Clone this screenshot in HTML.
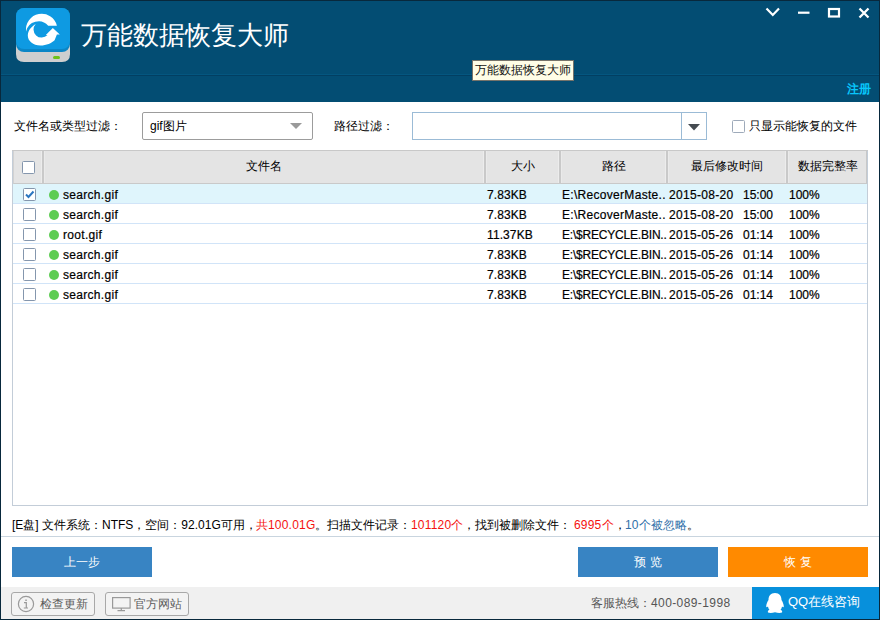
<!DOCTYPE html>
<html><head><meta charset="utf-8"><style>
*{box-sizing:border-box}
html,body{margin:0;padding:0}
body{width:880px;height:620px;overflow:hidden;position:relative;background:#fff;font-family:"Liberation Sans",sans-serif;font-size:12px;color:#000}
.a{position:absolute}
.k{letter-spacing:0;display:inline-block;text-align:justify;text-align-last:justify;white-space:nowrap;text-indent:0}
.nw{white-space:nowrap}
#hdr{left:0;top:0;width:880px;height:102px;background:#034d73}
#bord{left:0;top:0;width:880px;height:620px;border:1px solid #08283c;pointer-events:none}
.cb{width:13px;height:13px;border:1px solid #8496ad;border-radius:1.5px;background:#fff}
.th{top:151px;height:32px;line-height:31px;text-align:center;color:#000}
.sep{top:151px;width:4px;height:32px;background:#c9c9c9;border-left:1px solid #ececec;border-right:1px solid #eaeaea}
.row{left:13px;width:854px;height:20px;border-bottom:1px solid #d1e4f8}
.cell{height:20px;line-height:20px;white-space:nowrap;color:#000;-webkit-text-stroke:.2px #000}
.dot{width:10px;height:10px;border-radius:50%;background:#5dcc52}
.btn{height:30px;line-height:31px;text-align:center;color:#fff;font-size:12px}
.red{color:#f5120f}
.blu{color:#2f6fa8}
</style></head><body>
<div id="hdr" class="a"></div>
<div class="a" style="left:0;top:74px;width:880px;height:1px;background:#04567f"></div>
<div class="a" style="left:0;top:75px;width:880px;height:1px;background:#023f62"></div>
<!-- logo -->
<svg class="a" style="left:16px;top:8px" width="54" height="54" viewBox="0 0 54 54">
  <path d="M0 32 L0 46 Q0 54 8 54 L46 54 Q54 54 54 46 L54 32 Z" fill="#cfcfcf"/>
  <rect x="0" y="0" width="54" height="44" rx="8" fill="#0b86c6"/>
  <rect x="0" y="0" width="54" height="41" rx="8" fill="#0e9ae2"/>
  <rect x="37" y="48" width="7" height="3" rx="1.5" fill="#6cc21a"/>
  <g fill="#fff">
    <path d="M10.1 23.5 A15.7 15.7 0 0 1 40.9 17.7 L32.2 17.7 A12.7 12.7 0 0 0 10.1 23.5 Z"/>
    <path d="M19.7 16 C15.5 18.5 11.8 22.5 11.8 27.5 C11.8 33 17 37.5 24.5 37.5 C30.5 37.5 35.5 35 38.6 32.2 L40.9 26.4 L43.8 26.5 L36.8 20 L29.8 27 L31.5 27 A7.9 7.9 0 1 1 19.7 16 Z"/>
  </g>
</svg>
<div class="a nw" style="left:81px;top:19px;font-size:26px;line-height:32px;color:#fff"><span class="k" style="width:8em">万能数据恢复大师</span></div>
<!-- window controls -->
<svg class="a" style="left:760px;top:0" width="120" height="26" viewBox="0 0 120 26">
  <path d="M6.5 8.5 L12.8 15 L19 8.5" stroke="#fff" stroke-width="2.2" fill="none"/>
  <rect x="38" y="11.6" width="11.5" height="2.2" fill="#fff"/>
  <rect x="69" y="9" width="10" height="7.5" stroke="#fff" stroke-width="2.2" fill="none"/>
  <path d="M99.5 8.5 L108.5 17.5 M108.5 8.5 L99.5 17.5" stroke="#fff" stroke-width="2.3" fill="none"/>
</svg>
<!-- tooltip -->
<div class="a nw" style="left:472px;top:60px;width:102px;height:21px;background:#fffde6;border:1px solid #76736a;line-height:19px;padding-left:2px;color:#111"><span class="k" style="width:8em">万能数据恢复大师</span></div>
<div class="a nw" style="left:847px;top:81px;font-size:12px;line-height:16px;color:#08c6fb;font-weight:bold"><span class="k" style="width:2em">注册</span></div>

<!-- filter row -->
<div class="a nw" style="left:14px;top:118px;line-height:16px"><span class="k" style="width:9em">文件名或类型过滤：</span></div>
<div class="a" style="left:142px;top:112px;width:171px;height:28px;border:1px solid #9c9c9c;border-radius:2px;background:#fff"></div>
<div class="a nw" style="left:150px;top:118px;line-height:16px">gif<span class="k" style="width:2em">图片</span></div>
<svg class="a" style="left:290px;top:123px" width="12" height="7"><path d="M0 0 L12 0 L6 6 Z" fill="#9a9a9a"/></svg>
<div class="a nw" style="left:334px;top:118px;line-height:16px"><span class="k" style="width:5em">路径过滤：</span></div>
<div class="a" style="left:412px;top:112px;width:295px;height:28px;border:1px solid #9bbbd6;background:#fff"></div>
<div class="a" style="left:681px;top:113px;width:1px;height:26px;background:#9bbbd6"></div>
<svg class="a" style="left:688px;top:124px" width="12" height="7"><path d="M0 0 L12 0 L6 6.5 Z" fill="#454b51"/></svg>
<div class="a cb" style="left:732px;top:120px;border-color:#9eaaba"></div>
<div class="a nw" style="left:749px;top:118px;line-height:16px"><span class="k" style="width:9em">只显示能恢复的文件</span></div>

<!-- table -->
<div class="a" style="left:12px;top:150px;width:856px;height:356px;border:1px solid #c3cdd8;background:#fff"></div>
<div class="a" style="left:13px;top:151px;width:854px;height:33px;background:#e4e4e4;border-bottom:1px solid #c9c9c9;border-right:1px solid #c8c8c8;border-left:1px solid #d2d2d2"></div>
<div class="a" style="left:12px;top:150px;width:856px;height:1px;background:#c8c8c8"></div>
<div class="a cb" style="left:22px;top:161px"></div>
<div class="a sep" style="left:41px"></div>
<div class="a th" style="left:45px;width:438px"><span class="k" style="width:3em">文件名</span></div>
<div class="a sep" style="left:483px"></div>
<div class="a th" style="left:487px;width:71px"><span class="k" style="width:2em">大小</span></div>
<div class="a sep" style="left:558px"></div>
<div class="a th" style="left:562px;width:103px"><span class="k" style="width:2em">路径</span></div>
<div class="a sep" style="left:665px"></div>
<div class="a th" style="left:669px;width:116px"><span class="k" style="width:6em">最后修改时间</span></div>
<div class="a sep" style="left:785px"></div>
<div class="a th" style="left:789px;width:77px"><span class="k" style="width:5em">数据完整率</span></div>

<div class="a row" style="top:184px;background:#dff5fc;"></div><div class="a cb" style="left:23px;top:188px"></div><svg class="a" style="left:23px;top:188px" width="13" height="13"><path d="M3 6.5 L5.5 9 L10.5 3.5" stroke="#2b76c0" stroke-width="2" fill="none"/></svg><div class="a dot" style="left:49px;top:190px"></div><div class="a cell" style="left:63px;top:185px;letter-spacing:.3px">search.gif</div><div class="a cell" style="left:487px;top:185px;letter-spacing:.1px">7.83KB</div><div class="a cell" style="left:562px;top:185px;letter-spacing:.3px">E:\RecoverMaste..</div><div class="a cell" style="left:669px;top:185px;letter-spacing:.3px">2015-08-20</div><div class="a cell" style="left:743px;top:185px">15:00</div><div class="a cell" style="left:789px;top:185px">100%</div>
<div class="a row" style="top:204px;"></div><div class="a cb" style="left:23px;top:208px"></div><div class="a dot" style="left:49px;top:210px"></div><div class="a cell" style="left:63px;top:205px;letter-spacing:.3px">search.gif</div><div class="a cell" style="left:487px;top:205px;letter-spacing:.1px">7.83KB</div><div class="a cell" style="left:562px;top:205px;letter-spacing:.3px">E:\RecoverMaste..</div><div class="a cell" style="left:669px;top:205px;letter-spacing:.3px">2015-08-20</div><div class="a cell" style="left:743px;top:205px">15:00</div><div class="a cell" style="left:789px;top:205px">100%</div>
<div class="a row" style="top:224px;"></div><div class="a cb" style="left:23px;top:228px"></div><div class="a dot" style="left:49px;top:230px"></div><div class="a cell" style="left:63px;top:225px;letter-spacing:.3px">root.gif</div><div class="a cell" style="left:487px;top:225px;letter-spacing:.1px">11.37KB</div><div class="a cell" style="left:562px;top:225px;letter-spacing:-.2px">E:\$RECYCLE.BIN..</div><div class="a cell" style="left:669px;top:225px;letter-spacing:.3px">2015-05-26</div><div class="a cell" style="left:743px;top:225px">01:14</div><div class="a cell" style="left:789px;top:225px">100%</div>
<div class="a row" style="top:244px;"></div><div class="a cb" style="left:23px;top:248px"></div><div class="a dot" style="left:49px;top:250px"></div><div class="a cell" style="left:63px;top:245px;letter-spacing:.3px">search.gif</div><div class="a cell" style="left:487px;top:245px;letter-spacing:.1px">7.83KB</div><div class="a cell" style="left:562px;top:245px;letter-spacing:-.2px">E:\$RECYCLE.BIN..</div><div class="a cell" style="left:669px;top:245px;letter-spacing:.3px">2015-05-26</div><div class="a cell" style="left:743px;top:245px">01:14</div><div class="a cell" style="left:789px;top:245px">100%</div>
<div class="a row" style="top:264px;"></div><div class="a cb" style="left:23px;top:268px"></div><div class="a dot" style="left:49px;top:270px"></div><div class="a cell" style="left:63px;top:265px;letter-spacing:.3px">search.gif</div><div class="a cell" style="left:487px;top:265px;letter-spacing:.1px">7.83KB</div><div class="a cell" style="left:562px;top:265px;letter-spacing:-.2px">E:\$RECYCLE.BIN..</div><div class="a cell" style="left:669px;top:265px;letter-spacing:.3px">2015-05-26</div><div class="a cell" style="left:743px;top:265px">01:14</div><div class="a cell" style="left:789px;top:265px">100%</div>
<div class="a row" style="top:284px;"></div><div class="a cb" style="left:23px;top:288px"></div><div class="a dot" style="left:49px;top:290px"></div><div class="a cell" style="left:63px;top:285px;letter-spacing:.3px">search.gif</div><div class="a cell" style="left:487px;top:285px;letter-spacing:.1px">7.83KB</div><div class="a cell" style="left:562px;top:285px;letter-spacing:-.2px">E:\$RECYCLE.BIN..</div><div class="a cell" style="left:669px;top:285px;letter-spacing:.3px">2015-05-26</div><div class="a cell" style="left:743px;top:285px">01:14</div><div class="a cell" style="left:789px;top:285px">100%</div>

<!-- status -->
<div class="a nw" style="left:12px;top:517px;line-height:16px">[E<span class="k" style="width:1em">盘</span>] <span class="k" style="width:5em">文件系统：</span>NTFS<span class="k" style="width:4em">，空间：</span>92.01G<span class="k" style="width:3em">可用，</span></div>
<div class="a nw" style="left:256px;top:517px;line-height:16px;letter-spacing:.2px"><span class="red"><span class="k" style="width:1em">共</span>100.01G</span><span class="k" style="width:8em">。扫描文件记录：</span></div>
<div class="a nw" style="left:411px;top:517px;line-height:16px;letter-spacing:.2px"><span class="red">101120<span class="k" style="width:1em">个</span></span><span class="k" style="width:9em">，找到被删除文件：</span></div>
<div class="a nw" style="left:574px;top:517px;line-height:16px;letter-spacing:.2px"><span class="red">6995<span class="k" style="width:1em">个</span></span><span class="k" style="width:1em">，</span></div>
<div class="a nw" style="left:625px;top:517px;line-height:16px;letter-spacing:.2px"><span class="blu">10<span class="k" style="width:4em">个被忽略</span></span><span class="k" style="width:1em">。</span></div>
<div class="a" style="left:1px;top:536px;width:878px;height:1px;background:#c9d5df"></div>

<!-- buttons -->
<div class="a btn" style="left:12px;top:547px;width:140px;background:#3884c3"><span class="k" style="width:3em">上一步</span></div>
<div class="a btn" style="left:578px;top:547px;width:140px;background:#3884c3"><span class="k" style="width:1em">预</span> <span class="k" style="width:1em">览</span></div>
<div class="a btn" style="left:728px;top:547px;width:140px;background:#ff8a00"><span class="k" style="width:1em">恢</span> <span class="k" style="width:1em">复</span></div>

<!-- bottom bar -->
<div class="a" style="left:0;top:587px;width:880px;height:33px;background:#f0f0f0"></div>
<div class="a" style="left:11px;top:592px;width:84px;height:24px;border:1px solid #a8a8a8;border-radius:3px;background:#f3f3f3"></div>
<svg class="a" style="left:17px;top:595px" width="18" height="18" viewBox="0 0 18 18">
  <circle cx="9" cy="9" r="7.6" stroke="#999" stroke-width="1.2" fill="none"/>
  <rect x="8.3" y="4.5" width="1.5" height="1.5" fill="#999"/>
  <path d="M7 7.6 H9.3 V12.5 M6.8 13 H11" stroke="#999" stroke-width="1.2" fill="none"/>
</svg>
<div class="a nw" style="left:40px;top:596px;line-height:16px;font-size:12px;color:#5c5c5c"><span class="k" style="width:4em">检查更新</span></div>
<div class="a" style="left:105px;top:592px;width:84px;height:24px;border:1px solid #a8a8a8;border-radius:3px;background:#f3f3f3"></div>
<svg class="a" style="left:111px;top:596px" width="21" height="16" viewBox="0 0 21 16">
  <rect x="1.6" y="1.6" width="17.5" height="10.5" stroke="#999" stroke-width="1.2" fill="none"/>
  <path d="M10.3 12 V14.6 M6.5 14.6 H14" stroke="#999" stroke-width="1.2"/>
</svg>
<div class="a nw" style="left:134px;top:596px;line-height:16px;font-size:12px;color:#5c5c5c"><span class="k" style="width:4em">官方网站</span></div>
<div class="a nw" style="left:591px;top:595px;line-height:16px;font-size:12px;color:#555;letter-spacing:.4px"><span class="k" style="width:5em">客服热线：</span>400-089-1998</div>
<div class="a" style="left:752px;top:587px;width:127px;height:32px;background:#0790dc"></div>
<svg class="a" style="left:765px;top:592px" width="20" height="22" viewBox="0 0 20 22">
  <path d="M10 1 C14.5 1 16.5 4 16.5 8 C17.5 9.5 18.8 12 18.8 14.5 C18.8 15.5 18 15.5 17 14.5 C16.8 16 16.2 17 15.5 17.8 C17 18.5 17.5 19.5 17 20.5 C15.5 21.2 12.5 21 10 20.3 C7.5 21 4.5 21.2 3 20.5 C2.5 19.5 3 18.5 4.5 17.8 C3.8 17 3.2 16 3 14.5 C2 15.5 1.2 15.5 1.2 14.5 C1.2 12 2.5 9.5 3.5 8 C3.5 4 5.5 1 10 1 Z" fill="#fff"/>
</svg>
<div class="a nw" style="left:788px;top:593px;line-height:18px;font-size:13px;color:#fff">QQ<span class="k" style="width:4em">在线咨询</span></div>

<div id="bord" class="a"></div>
</body></html>
